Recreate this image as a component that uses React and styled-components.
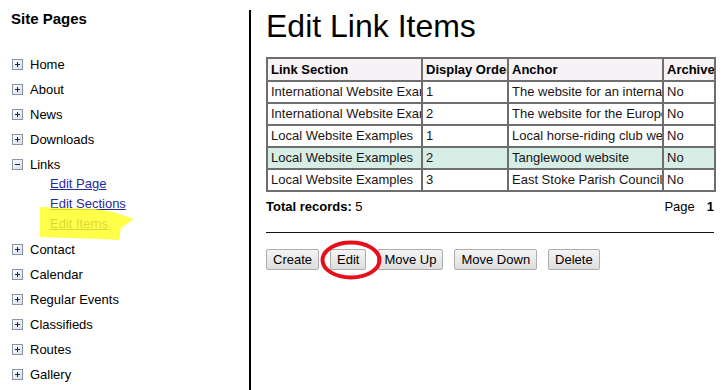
import React from 'react';
import styled, { createGlobalStyle } from 'styled-components';

const GlobalStyle = createGlobalStyle`
  html, body {
    margin: 0;
    padding: 0;
    background: #ffffff;
    overflow: hidden;
  }
  body {
    font-family: "Liberation Sans", Arial, sans-serif;
    font-size: 13px;
    color: #000;
  }
`

const Page = styled.div`
  display: flex;
  padding-top: 10px;
  height: 380px;
`

const Sidebar = styled.aside`
  width: 251px;
  flex: none;
  border-right: 2px solid #000;
  padding-left: 11px;
  box-sizing: border-box;
`

const SideTitle = styled.h2`
  margin: 0;
  font-size: 15px;
  line-height: 18px;
  font-weight: bold;
`

const NavList = styled.ul`
  list-style: none;
  margin: 26px 0 0;
  padding: 0 0 0 1px;
`

const NavItem = styled.li`
  margin-bottom: 5px;
`

const NavRow = styled.div`
  display: flex;
  align-items: center;
  gap: 7px;
  height: 20px;
  font-size: 13px;
`

const SubList = styled.ul`
  list-style: none;
  margin: 0;
  padding: 0 0 0 38px;
`

const SubItem = styled.li`
  position: relative;
  height: 20px;
  line-height: 20px;
`

const SubLink = styled.a`
  color: #1f2a9c;
  text-decoration: underline;
  font-size: 13px;
`

const Highlight = styled.svg`
  position: absolute;
  left: -10px;
  top: -7px;
  pointer-events: none;
`

const Main = styled.main`
  flex: 1;
  padding-left: 15px;
  min-width: 0;
`

const Heading = styled.h1`
  margin: 0 0 15px;
  font-size: 32px;
  line-height: 32px;
  font-weight: normal;
`

const Table = styled.table`
  width: 448px;
  table-layout: fixed;
  border-collapse: collapse;
  border: 2px solid #6e6e6e;
`

const Th = styled.th`
  border: 2px solid #6e6e6e;
  background: #f6f2f6;
  text-align: left;
  font-weight: bold;
  padding: 0 3px;
  height: 21px;
  line-height: 21px;
  white-space: nowrap;
  overflow: hidden;
`

const Row = styled.tr`
  background: ${p => (p.$selected ? '#d6eee6' : '#ffffff')};
`

const Td = styled.td`
  border: 2px solid #6e6e6e;
  padding: 0 3px;
  height: 20px;
  line-height: 20px;
  white-space: nowrap;
  overflow: hidden;
  color: #1c1414;
`

const Footer = styled.div`
  width: 448px;
  display: flex;
  justify-content: space-between;
  margin-top: 7px;
  line-height: 16px;
`

const PageNo = styled.b`
  margin-left: 12px;
`

const Rule = styled.hr`
  width: 448px;
  margin: 17px 0 0;
  border: none;
  border-top: 1px solid #111;
  height: 0;
`

const ButtonBar = styled.div`
  position: relative;
  display: flex;
  gap: 11px;
  margin-top: 16px;
`

const Button = styled.button`
  font-family: "Liberation Sans", Arial, sans-serif;
  font-size: 13px;
  height: 21px;
  padding: 0 6px;
  border: 1px solid #adadad;
  border-radius: 2px;
  background: linear-gradient(#f4f4f4, #dedede);
  color: #000;
`

const Circle = styled.svg`
  position: absolute;
  left: 54px;
  top: -9px;
  pointer-events: none;
`

const ToggleIcon = ({ open }) => (
  <svg width="11" height="11" viewBox="0 0 11 11">
    <defs>
      <linearGradient id="tg" x1="0" y1="0" x2="1" y2="1">
        <stop offset="0" stopColor="#ffffff" />
        <stop offset="1" stopColor="#d6dde8" />
      </linearGradient>
    </defs>
    <rect x="0.5" y="0.5" width="10" height="10" fill="url(#tg)" stroke="#8895a8" />
    <line x1="3" y1="5.5" x2="8" y2="5.5" stroke="#1b2540" />
    {!open && <line x1="5.5" y1="3" x2="5.5" y2="8" stroke="#1b2540" />}
  </svg>
)

const pages = [
  { name: 'Home' },
  { name: 'About' },
  { name: 'News' },
  { name: 'Downloads' },
  { name: 'Links', open: true, children: ['Edit Page', 'Edit Sections', 'Edit Items'] },
  { name: 'Contact' },
  { name: 'Calendar' },
  { name: 'Regular Events' },
  { name: 'Classifieds' },
  { name: 'Routes' },
  { name: 'Gallery' },
]

const items = [
  ['International Website Examples', '1', 'The website for an international club', 'No'],
  ['International Website Examples', '2', 'The website for the European federation', 'No'],
  ['Local Website Examples', '1', 'Local horse-riding club website', 'No'],
  ['Local Website Examples', '2', 'Tanglewood website', 'No'],
  ['Local Website Examples', '3', 'East Stoke Parish Council', 'No'],
]

const App = () => {
  return (
    <Page>
      <GlobalStyle />
      <Sidebar>
        <SideTitle>Site Pages</SideTitle>
        <NavList>
          {pages.map(p => (
            <NavItem key={p.name}>
              <NavRow>
                <ToggleIcon open={p.open} />
                <span>{p.name}</span>
              </NavRow>
              {p.children && (
                <SubList>
                  {p.children.map(c => (
                    <SubItem key={c}>
                      <SubLink href="#">{c}</SubLink>
                      {c === 'Edit Items' && (
                        <Highlight width="95" height="35" viewBox="40 207 95 35">
                          <polygon
                            points="40,207 95,209 113,212 134,219 121,228 119,240 100,239 40,237"
                            fill="#ffff22"
                            opacity="0.82"
                          />
                        </Highlight>
                      )}
                    </SubItem>
                  ))}
                </SubList>
              )}
            </NavItem>
          ))}
        </NavList>
      </Sidebar>

      <Main>
        <Heading>Edit Link Items</Heading>
        <Table>
          <colgroup>
            <col style={{ width: 155 }} />
            <col style={{ width: 86 }} />
            <col style={{ width: 155 }} />
            <col style={{ width: 52 }} />
          </colgroup>
          <thead>
            <tr>
              <Th>Link Section</Th>
              <Th>Display Order</Th>
              <Th>Anchor</Th>
              <Th>Archived</Th>
            </tr>
          </thead>
          <tbody>
            {items.map((r, i) => (
              <Row key={i} $selected={i === 3}>
                {r.map((c, j) => <Td key={j}>{c}</Td>)}
              </Row>
            ))}
          </tbody>
        </Table>
        <Footer>
          <span><b>Total records:</b> 5</span>
          <span>Page<PageNo>1</PageNo></span>
        </Footer>
        <Rule />
        <ButtonBar>
          <Button>Create</Button>
          <Button>Edit</Button>
          <Button>Move Up</Button>
          <Button>Move Down</Button>
          <Button>Delete</Button>
          <Circle width="62" height="40" viewBox="0 0 62 40">
            <ellipse cx="31" cy="20" rx="28.5" ry="17.5" fill="none" stroke="#e5101c" strokeWidth="4" />
          </Circle>
        </ButtonBar>
      </Main>
    </Page>
  )
}

export default App;
